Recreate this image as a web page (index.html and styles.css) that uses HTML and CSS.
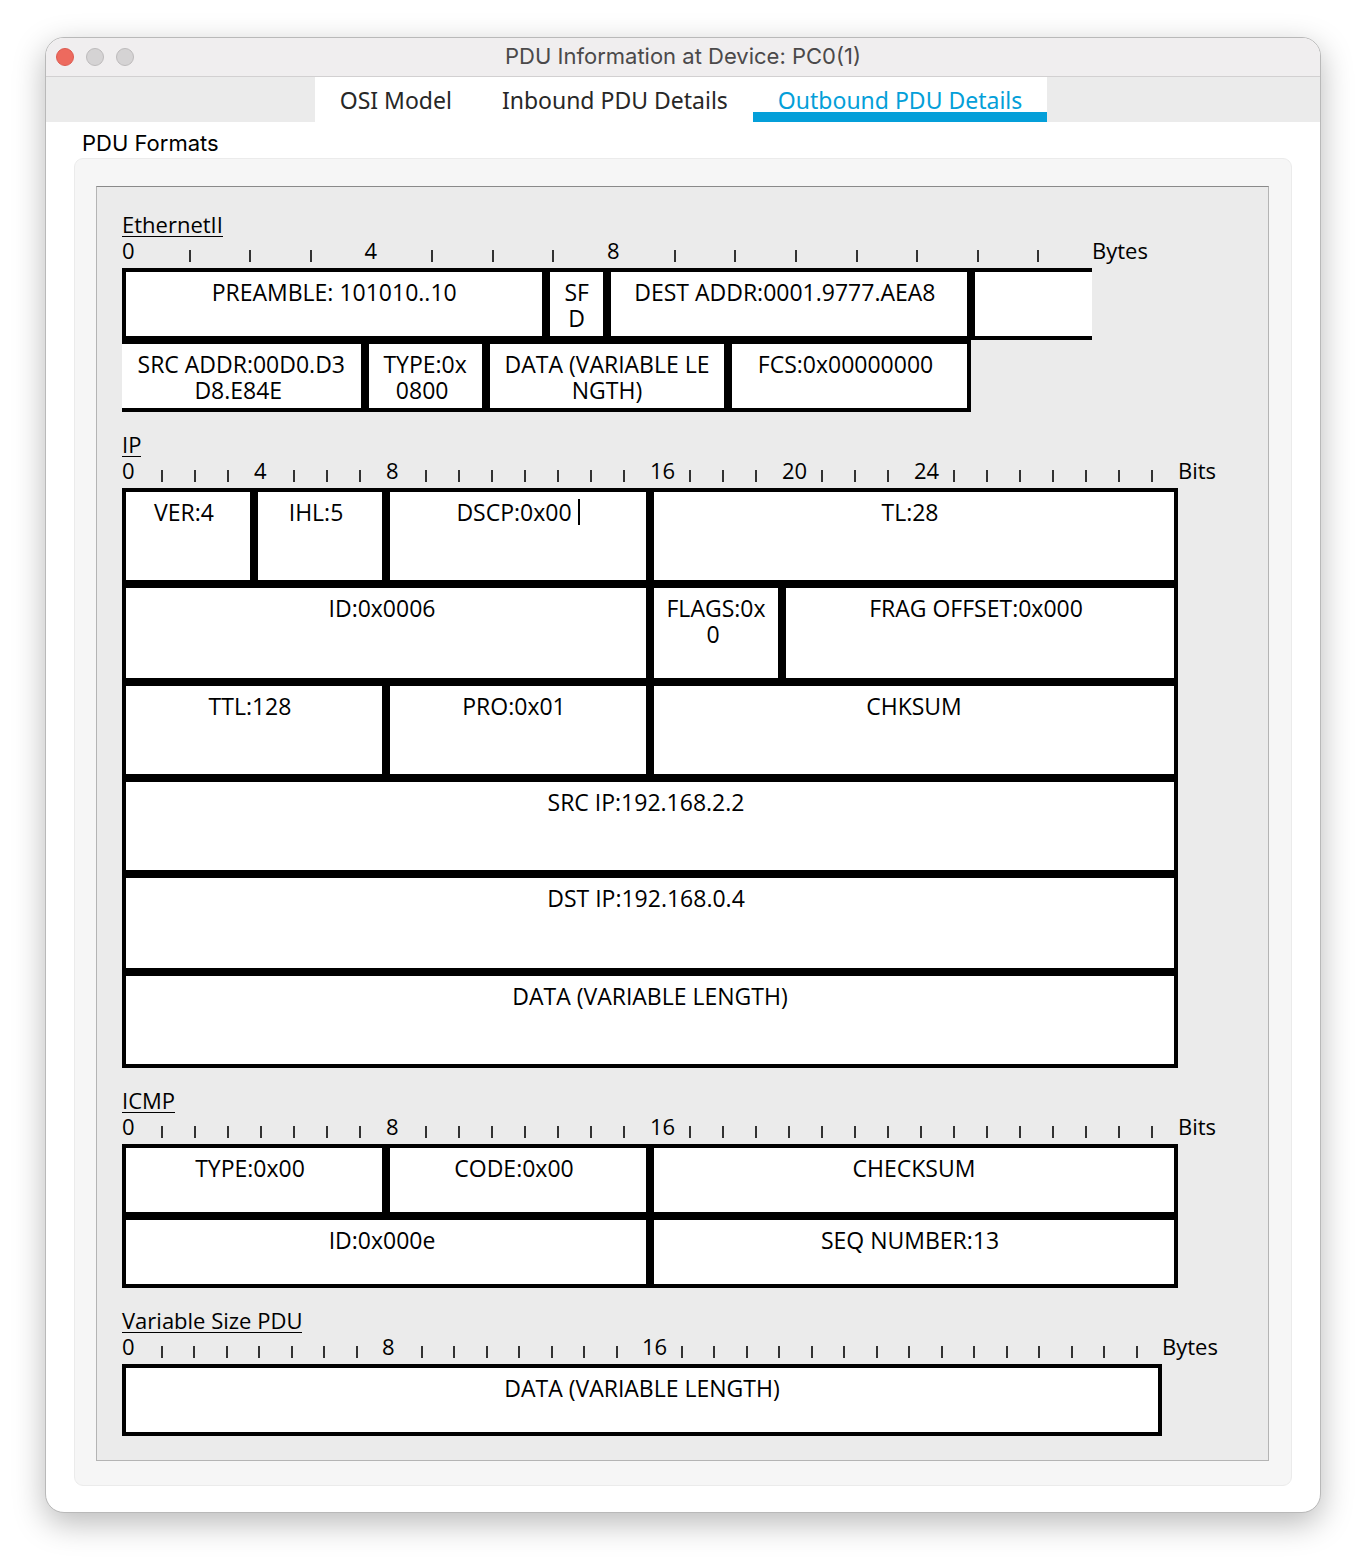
FILE: index.html
```html
<!DOCTYPE html>
<html lang="en">
<head>
<meta charset="utf-8">
<meta name="viewport" content="width=device-width, initial-scale=1">
<title>PDU Information at Device: PC0(1)</title>
<link rel="stylesheet" href="styles.css">
</head>
<body>
<main class="window">
  <header class="titlebar">
    <div class="lights">
      <button class="light light-close" type="button" aria-label="Close"></button>
      <button class="light" type="button" aria-label="Minimize" disabled></button>
      <button class="light" type="button" aria-label="Zoom" disabled></button>
    </div>
    <h1 class="title">PDU Information at Device: PC0(1)</h1>
  </header>
  <nav class="tabbar" role="tablist">
    <button class="tab" type="button" role="tab">OSI Model</button>
    <button class="tab" type="button" role="tab">Inbound PDU Details</button>
    <button class="tab tab-active" type="button" role="tab" aria-selected="true">Outbound PDU Details</button>
  </nav>
  <div class="content">
    <h2 class="group-label">PDU Formats</h2>
    <div class="group">
      <div class="frame">

        <section class="pdu pdu-ethernet">
          <h3 class="pdu-name">EthernetII</h3>
          <div class="ruler">
            <span>0</span><i></i><i></i><i></i><span>4</span><i></i><i></i><i></i>
            <span>8</span><i></i><i></i><i></i><i></i><i></i><i></i><i></i>
          </div>
          <div class="unit">Bytes</div>
          <table class="fields">
            <colgroup><col span="16"></colgroup>
            <tr>
              <td colspan="7">PREAMBLE: 101010..10</td>
              <td colspan="1">SF<br>D</td>
              <td colspan="6" class="value">DEST ADDR:0001.9777.AEA8</td>
              <td colspan="2" class="open-right"></td>
            </tr>
            <tr>
              <td colspan="4" class="open-left">SRC ADDR:00D0.D3<br>D8.E84E&nbsp;</td>
              <td colspan="2">TYPE:0x<br>0800&nbsp;</td>
              <td colspan="4">DATA (VARIABLE LE<br>NGTH)</td>
              <td colspan="4" class="value">FCS:0x00000000</td>
            </tr>
          </table>
        </section>

        <section class="pdu pdu-ip">
          <h3 class="pdu-name">IP</h3>
          <div class="ruler">
            <span>0</span><i></i><i></i><i></i><span>4</span><i></i><i></i><i></i>
            <span>8</span><i></i><i></i><i></i><i></i><i></i><i></i><i></i>
            <span>16</span><i></i><i></i><i></i><span>20</span><i></i><i></i><i></i>
            <span>24</span><i></i><i></i><i></i><i></i><i></i><i></i><i></i>
          </div>
          <div class="unit">Bits</div>
          <table class="fields">
            <colgroup><col span="32"></colgroup>
            <tr>
              <td colspan="4" class="value">VER:4</td>
              <td colspan="4" class="value">IHL:5</td>
              <td colspan="8">DSCP:0x00<span class="caret"></span></td>
              <td colspan="16" class="value">TL:28</td>
            </tr>
            <tr class="tall">
              <td colspan="16" class="value">ID:0x0006</td>
              <td colspan="4">FLAGS:0x<br>0&nbsp;</td>
              <td colspan="12" class="value">FRAG OFFSET:0x000</td>
            </tr>
            <tr>
              <td colspan="8" class="value">TTL:128</td>
              <td colspan="8" class="value">PRO:0x01</td>
              <td colspan="16">CHKSUM</td>
            </tr>
            <tr><td colspan="32" class="value">SRC IP:192.168.2.2</td></tr>
            <tr class="tall"><td colspan="32" class="value">DST IP:192.168.0.4</td></tr>
            <tr><td colspan="32">DATA (VARIABLE LENGTH)</td></tr>
          </table>
        </section>

        <section class="pdu pdu-icmp">
          <h3 class="pdu-name">ICMP</h3>
          <div class="ruler">
            <span>0</span><i></i><i></i><i></i><i></i><i></i><i></i><i></i>
            <span>8</span><i></i><i></i><i></i><i></i><i></i><i></i><i></i>
            <span>16</span><i></i><i></i><i></i><i></i><i></i><i></i><i></i>
            <i></i><i></i><i></i><i></i><i></i><i></i><i></i><i></i>
          </div>
          <div class="unit">Bits</div>
          <table class="fields">
            <colgroup><col span="32"></colgroup>
            <tr>
              <td colspan="8" class="value">TYPE:0x00</td>
              <td colspan="8" class="value">CODE:0x00</td>
              <td colspan="16">CHECKSUM</td>
            </tr>
            <tr>
              <td colspan="16" class="value">ID:0x000e</td>
              <td colspan="16" class="value">SEQ NUMBER:13</td>
            </tr>
          </table>
        </section>

        <section class="pdu pdu-variable">
          <h3 class="pdu-name">Variable Size PDU</h3>
          <div class="ruler">
            <span>0</span><i></i><i></i><i></i><i></i><i></i><i></i><i></i>
            <span>8</span><i></i><i></i><i></i><i></i><i></i><i></i><i></i>
            <span>16</span><i></i><i></i><i></i><i></i><i></i><i></i><i></i>
            <i></i><i></i><i></i><i></i><i></i><i></i><i></i><i></i>
          </div>
          <div class="unit">Bytes</div>
          <table class="fields">
            <tr><td>DATA (VARIABLE LENGTH)</td></tr>
          </table>
        </section>

      </div>
    </div>
  </div>
</main>
</body>
</html>
```
FILE: styles.css
```css
* {
  box-sizing: border-box;
}

body {
  margin: 0;
  padding: 37px 45px 53px;
  background: #fff;
  color: #000;
  font: 22px/26px "Open Sans", "Noto Sans", sans-serif;
}

h1, h2, h3 {
  margin: 0;
  font-size: inherit;
  font-weight: 400;
}

button {
  margin: 0;
  border: 0;
  font: inherit;
}

.window {
  border: 1px solid #b9b9b9;
  border-radius: 19px;
  background: #fff;
  box-shadow: 0 10px 32px rgba(0, 0, 0, 0.28);
  overflow: hidden;
}

/* Title bar */

.titlebar {
  display: grid;
  grid-template-columns: 1fr auto 1fr;
  align-items: center;
  height: 39px;
  padding: 0 10px;
  border-bottom: 1px solid #d2d0d1;
  background: #f0eeef;
}

.lights {
  display: flex;
  gap: 12px;
}

.light {
  width: 18px;
  height: 18px;
  padding: 0;
  border: 1px solid #bcbabb;
  border-radius: 50%;
  background: #d5d3d4;
}

.light-close {
  border-color: #dc5a50;
  background: #ed6a5e;
}

.title {
  padding-bottom: 2px;
  color: #4b494a;
  font-family: Inter, sans-serif;
}

/* Tabs */

.tabbar {
  display: flex;
  justify-content: center;
  height: 45px;
  padding-right: 4px;
  background: #ebebeb;
}

.tab {
  padding: 2px 25px 0;
  border-top: 10px solid #fff;
  border-bottom: 10px solid #fff;
  background: #fff;
  color: #272727;
  font-family: "Noto Sans", sans-serif;
  font-size: 23px;
  line-height: 23px;
}

.tab-active {
  border-bottom-color: #049fd9;
  color: #049fd9;
}

/* Group box */

.content {
  padding: 8px 28px 26px;
}

.group-label {
  padding: 0 8px 2px;
  font-family: Inter, sans-serif;
}

.group {
  padding: 27px 22px 24px 21px;
  border: 1px solid #ebebeb;
  border-radius: 9px;
  background: #f6f6f6;
}

.frame {
  display: flex;
  flex-direction: column;
  gap: 20px;
  padding: 25px 25px 24px;
  border: 1px solid #b4b4b4;
  border-top-color: #8a8a8a;
  background: #ebebeb;
}

/* Packet diagrams */

.pdu {
  display: grid;
  grid-template-columns: minmax(0, 1fr) 65px;
  line-height: 24px;
}

.pdu-ethernet {
  grid-template-columns: minmax(0, 1fr) 151px;
}

.pdu-variable {
  grid-template-columns: minmax(0, 1fr) 81px;
}

.pdu-name {
  grid-column: 1 / -1;
  justify-self: start;
  height: 25px;
  margin-bottom: 1px;
  border-bottom: 1px solid #000;
}

.ruler {
  display: grid;
  grid-auto-flow: column;
  grid-auto-columns: minmax(0, 1fr);
  height: 30px;
}

.ruler i {
  width: 2px;
  height: 12px;
  margin: 12px 0 0 6px;
  background: #333;
}

.fields {
  grid-column: 1;
  width: 100%;
  border-spacing: 0;
  table-layout: fixed;
  font-size: 23px;
  line-height: 26px;
}

.fields td {
  height: 72px;
  padding: 7px 0 5px;
  border: 4px solid #000;
  background: #fff;
  text-align: center;
  vertical-align: top;
  white-space: nowrap;
}

.pdu-ip .fields td {
  height: 96px;
}

.pdu-ip .fields .tall td {
  height: 98px;
}

.fields .value {
  padding-right: 8px;
}

.fields .open-left {
  border-left: 0;
}

.fields .open-right {
  border-right: 0;
}

.caret {
  display: inline-block;
  width: 2px;
  height: 26px;
  margin-left: 6px;
  background: #000;
  vertical-align: top;
}
```
